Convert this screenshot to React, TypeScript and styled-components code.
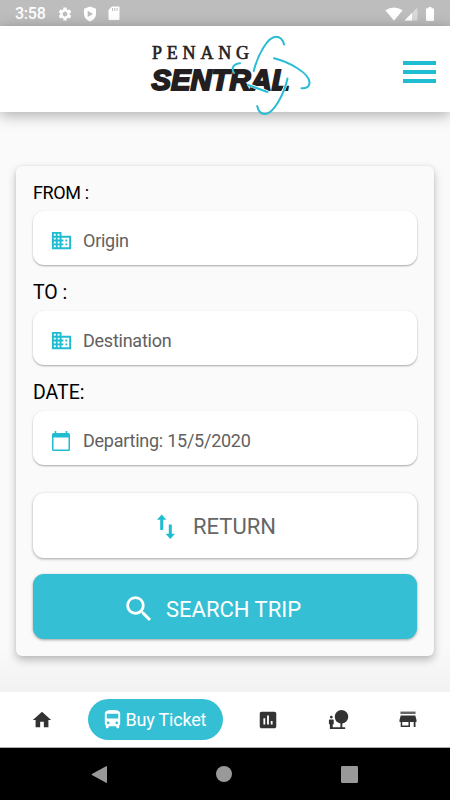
import React from "react";
import styled, { createGlobalStyle } from "styled-components";
import {
  MdSettings,
  MdBusiness,
  MdSearch,
  MdHome,
  MdDirectionsBus,
  MdInsertChart,
  MdNaturePeople,
} from "react-icons/md";

const teal = "#35bfd4";
const iconTeal = "#20bcd2";

const GlobalStyle = createGlobalStyle`
  * { box-sizing: border-box; }
  body { margin: 0; background: #fafafa; font-family: Roboto, sans-serif; }
  button { font-family: inherit; }
  svg { display: block; flex-shrink: 0; }
`;

const Screen = styled.div`
  width: 450px;
  height: 800px;
  display: flex;
  flex-direction: column;
  background: #fafafa;
  overflow: hidden;
`;

const StatusBar = styled.div`
  height: 26px;
  background: #bdbdbd;
  color: #fff;
  display: flex;
  align-items: center;
  justify-content: space-between;
  padding: 1px 16px 0 15px;
`;

const StatusGroup = styled.div`
  display: flex;
  align-items: center;
`;

const StatusIcon = styled.span<{ $before: number }>`
  display: flex;
  margin-left: ${(p) => p.$before}px;
`;

const Clock = styled.span`
  font-size: 16px;
  font-weight: 500;
  line-height: 20px;
  width: 33px;
  padding-top: 1px;
  letter-spacing: -0.25px;
`;

const Header = styled.header`
  height: 86px;
  background: #fff;
  display: flex;
  justify-content: space-between;
  padding: 0 14px 0 140px;
  box-shadow: 0 3px 14px rgba(0, 0, 0, 0.32);
  z-index: 1;
`;

const LogoSvg = styled.svg`
  overflow: visible;
`;

const MenuButton = styled.button`
  border: 0;
  padding: 0;
  background: none;
  width: 33px;
  height: 22px;
  margin-top: 35px;
  display: flex;
  flex-direction: column;
  justify-content: space-between;
`;

const MenuLine = styled.span`
  width: 33px;
  height: 3.6px;
  background: ${iconTeal};
`;

const Main = styled.main`
  flex: 1;
  padding: 54px 16px 0;
  background: linear-gradient(#fafafa 0, #fafafa 92%, #f2f2f2 100%);
`;

const Card = styled.section`
  height: 490px;
  padding: 14px 17px 0;
  border-radius: 6px;
  background: #fafafa;
  box-shadow: 0 4px 8px rgba(0, 0, 0, 0.25), 0 0 3px rgba(0, 0, 0, 0.07);
`;

const Label = styled.label<{ $size: number; $track?: number; $top?: number }>`
  display: block;
  height: ${(p) => 26 + (p.$top ?? 0)}px;
  padding-top: ${(p) => p.$top ?? 0}px;
  line-height: 26px;
  font-size: ${(p) => p.$size}px;
  letter-spacing: ${(p) => p.$track ?? 0}px;
  color: #000;
`;

const Field = styled.div`
  height: 54px;
  margin: 5px 0 0;
  padding: 5px 18px 0 17px;
  border-radius: 11px;
  background: #fff;
  box-shadow: 0 1px 2px rgba(0, 0, 0, 0.34);
  display: flex;
  align-items: center;
  gap: 11px;
  color: #616161;
  font-size: 18px;
  letter-spacing: -0.25px;
  line-height: 24px;
`;

const IconSlot = styled.span`
  width: 22px;
  height: 22px;
  display: flex;
  align-items: center;
  justify-content: center;
  color: ${iconTeal};
`;

const Action = styled.button<{ $primary?: boolean }>`
  width: 100%;
  height: 65px;
  margin-top: ${(p) => (p.$primary ? 16 : 28)}px;
  border: 0;
  border-radius: 11px;
  padding: ${(p) => (p.$primary ? "5px 0 0 89px" : "1px 0 0 124px")};
  background: ${(p) => (p.$primary ? teal : "#fff")};
  color: ${(p) => (p.$primary ? "#fff" : "#666")};
  box-shadow: 0 1px 3px rgba(0, 0, 0, 0.36);
  display: flex;
  align-items: center;
  gap: ${(p) => (p.$primary ? 10 : 17)}px;
  font-size: 22px;
  line-height: 30px;
`;

const ActionText = styled.span`
  padding-top: 2px;
`;

const Nav = styled.nav`
  height: 56px;
  background: #fff;
  border-bottom: 1px solid #aab0b2;
  display: grid;
  grid-template-columns: 84px 142px 84px 56px 84px;
  align-items: center;
  justify-items: center;
  color: #333;
`;

const NavItem = styled.span`
  display: flex;
`;

const ActiveItem = styled.span`
  width: 135px;
  height: 41px;
  border-radius: 21px;
  background: ${teal};
  color: #fff;
  display: flex;
  align-items: center;
  padding-left: 13px;
  gap: 2px;
  font-size: 18px;
  letter-spacing: -0.2px;
  white-space: nowrap;
`;

const SystemBar = styled.div`
  height: 52px;
  background: #000;
  display: flex;
  align-items: center;
  justify-content: space-between;
  padding: 0 92px 0 91px;
`;

const Logo = () => (
  <LogoSvg width="180" height="96" viewBox="0 0 180 96">
    <text x="12" y="32.700" fontFamily="'Liberation Serif', serif" fontSize="18" fill="#242122" stroke="#242122" strokeWidth="0.6" textLength="97" lengthAdjust="spacing">PENANG</text>
    <text x="11.500" y="64.200" fontFamily="'Liberation Sans', sans-serif" fontWeight="700" fontStyle="italic" fontSize="29.500" fill="#231f20" stroke="#231f20" strokeWidth="2" textLength="138" lengthAdjust="spacingAndGlyphs">SENTRAL</text>
    <g fill="none" stroke="#fff" strokeWidth="3.2">
      <path d="M147.5 52C146 59 144 64 142 67" />
      <path d="M108 58.5L128 66" />
    </g>
    <g fill="none" stroke="#28bdd3" strokeWidth="2" strokeLinecap="round">
      <path d="M113.7 45C118 28 128 10.7 136 10.7C140.5 10.7 143 14 144 18.5" />
      <path d="M134 32.3C149 36 169.5 47 169.5 56.5C169.5 61 166 62.5 161.5 62.2" />
      <path d="M147.5 52.5C144 69 133 88 125 88C120.500 88 118 84 117.200 80" />
      <path d="M100 37.300C93 38 91 42.500 94 47M108 59L127.500 66" />
    </g>
  </LogoSvg>
);

const ShieldIcon = () => (
  <svg width="14" height="16" viewBox="0 0 14 16">
    <path fill="currentColor" fillRule="evenodd" d="M7 .5L13 2.800V7.500C13 11.300 10.500 14.500 7 15.500C3.500 14.500 1 11.300 1 7.500V2.800ZM4.700 4.800V11L10 7.900Z" />
  </svg>
);

const SdIcon = () => (
  <svg width="12" height="15" viewBox="0 0 12 15">
    <path fill="currentColor" d="M4 .5H10.500Q11.500.5 11.500 1.500V13Q11.500 14 10.500 14H1.500Q.5 14 .5 13V4Z" />
    <path stroke="#bdbdbd" strokeWidth="1" d="M4.500 2V5M6.800 2V5M9 2V5" />
  </svg>
);

const WifiIcon = () => (
  <svg width="18" height="14" viewBox="0 0 18 14">
    <path fill="currentColor" d="M.4 3.200Q9-2.400 17.600 3.200L9 13.700Z" />
  </svg>
);

const SignalIcon = () => (
  <svg width="14" height="14" viewBox="0 0 14 14">
    <path fill="#d9d9d9" d="M13.500.5V13.500H.5Z" />
    <path fill="#fff" d="M8 6V13.500H.5Z" />
  </svg>
);

const BatteryIcon = () => (
  <svg width="8" height="14" viewBox="0 0 8 14">
    <path fill="currentColor" d="M2.500 0H5.500V1.300H7Q8 1.300 8 2.300V13Q8 14 7 14H1Q0 14 0 13V2.300Q0 1.300 1 1.300H2.500Z" />
  </svg>
);

const CalendarIcon = () => (
  <svg width="20" height="22" viewBox="0 0 20 22">
    <path fill="currentColor" fillRule="evenodd" d="M3.700 1H5.300V3H14.700V1H16.300V3H17.500Q19 3 19 4.500V19.500Q19 21 17.500 21H2.500Q1 21 1 19.500V4.500Q1 3 2.500 3H3.700ZM2.500 7.500V19.500H17.500V7.500Z" />
  </svg>
);

const SwapIcon = () => (
  <svg width="19" height="25" viewBox="0 0 19 25">
    <path fill={iconTeal} d="M4.700.5L9.300 5.700H6.200V16H3.200V5.700H0ZM11.800 10.500H14.800V19.800H18L13.300 25L8.600 19.800H11.800Z" />
  </svg>
);

const StoreIcon = () => (
  <svg width="18" height="17" viewBox="0 0 18 17">
    <path fill="#777" d="M1.500.5H16.500V2H1.500Z" />
    <path fill="#333" fillRule="evenodd" d="M1.500 1.700H16.500V2.800H1.500ZM1.700 4.500H16.300L17.500 9V11H16.500V16H14.700V11H11V16H1.700V11H.5V9ZM3.200 11V14.500H9.500V11Z" />
  </svg>
);

export default function App() {
  return (
    <>
      <GlobalStyle />
      <Screen>
        <StatusBar>
          <StatusGroup>
            <Clock>3:58</Clock>
            <StatusIcon $before={9}><MdSettings size={16} /></StatusIcon>
            <StatusIcon $before={10}><ShieldIcon /></StatusIcon>
            <StatusIcon $before={11}><SdIcon /></StatusIcon>
          </StatusGroup>
          <StatusGroup>
            <StatusIcon $before={0}><WifiIcon /></StatusIcon>
            <StatusIcon $before={1}><SignalIcon /></StatusIcon>
            <StatusIcon $before={8}><BatteryIcon /></StatusIcon>
          </StatusGroup>
        </StatusBar>
        <Header>
          <Logo />
          <MenuButton aria-label="Menu">
            <MenuLine /><MenuLine /><MenuLine />
          </MenuButton>
        </Header>
        <Main>
          <Card>
            <Label $size={18} $track={-0.35}>FROM :</Label>
            <Field><IconSlot><MdBusiness size={23} /></IconSlot>Origin</Field>
            <Label $size={19.5} $top={15}>TO :</Label>
            <Field><IconSlot><MdBusiness size={23} /></IconSlot>Destination</Field>
            <Label $size={19.5} $top={15}>DATE:</Label>
            <Field><IconSlot><CalendarIcon /></IconSlot>Departing: 15/5/2020</Field>
            <Action><SwapIcon /><ActionText>RETURN</ActionText></Action>
            <Action $primary><MdSearch size={34} /><ActionText>SEARCH TRIP</ActionText></Action>
          </Card>
        </Main>
        <Nav>
          <NavItem><MdHome size={22} /></NavItem>
          <ActiveItem><MdDirectionsBus size={23} />Buy Ticket</ActiveItem>
          <NavItem><MdInsertChart size={22} /></NavItem>
          <NavItem><MdNaturePeople size={23} /></NavItem>
          <NavItem><StoreIcon /></NavItem>
        </Nav>
        <SystemBar>
          <svg width="16" height="19" viewBox="0 0 17 19"><path fill="#999" d="M16 .7Q17 .2 17 1.200V17.800Q17 18.800 16 18.300L1 10Q.4 9.500 1 9Z" /></svg>
          <svg width="16" height="16" viewBox="0 0 16 16"><circle cx="8" cy="8" r="8" fill="#999" /></svg>
          <svg width="17" height="17" viewBox="0 0 17 17"><rect width="17" height="17" rx="1.200" fill="#999" /></svg>
        </SystemBar>
      </Screen>
    </>
  );
}
